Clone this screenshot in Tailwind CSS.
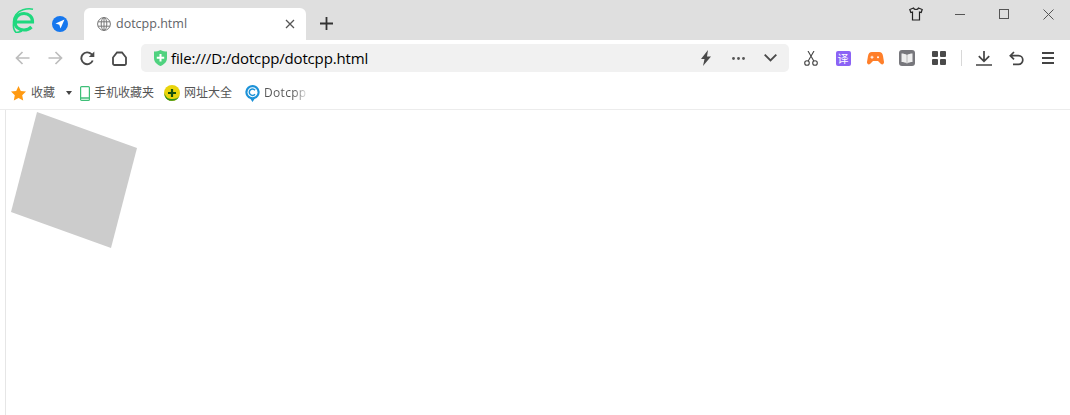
<!DOCTYPE html>
<html lang="en">
<head>
    <meta charset="UTF-8">
    <title>dotcpp.html</title>
    <script src="https://cdn.jsdelivr.net/npm/@tailwindcss/browser@4"></script>
</head>
<body class="bg-white w-[1070px] h-[415px] overflow-hidden flex flex-col font-['Inter','Noto_Sans_CJK_SC',sans-serif]">
    <!-- tab strip -->
    <div class="h-10 bg-[#dfdfdf] flex shrink-0">
        <div class="w-[84px] flex items-start shrink-0">
            <svg class="ml-[12px] mt-[8px] shrink-0" width="23" height="25" viewBox="0 0 23 25" fill="none">
                <path d="M3 14h17.500c.2-5-3.500-8.500-8.500-8.500-5.500 0-9 3.800-9 8.500 0 5 4 8 9 8 3 0 5.500-1 7.500-3" stroke="#1fd87e" stroke-width="3.200"/>
                <path d="M1.500 15C1 9 5 3.500 11 1.800c3.500-1 7-1.200 10-.5" stroke="#1fd87e" stroke-width="1.500"/>
                <path d="M1.500 15c-.5 4 .5 7.500 2.500 9.500 2 0 4-.5 6-1.500" stroke="#1fd87e" stroke-width="1.500"/>
            </svg>
            <svg class="ml-[17px] mt-[16px] shrink-0" width="16" height="16" viewBox="0 0 16 16">
                <circle cx="8" cy="8" r="8" fill="#1677ee"/>
                <path d="M12.500 3.500L3.500 7.500l3.800 1.200L8.500 12.500z" fill="#fff"/>
            </svg>
        </div>
        <div class="mt-2 w-[222px] h-8 bg-white rounded-t-[6px] flex items-center pl-[13px] pr-[11px] shrink-0">
            <svg class="shrink-0" width="14" height="14" viewBox="0 0 14 14" fill="none" stroke="#777" stroke-width="1">
                <circle cx="7" cy="7" r="6.400"/>
                <ellipse cx="7" cy="7" rx="2.800" ry="6.400"/>
                <path d="M1 4.800h12M1 9.200h12M7 .6v12.800"/>
            </svg>
            <span class="ml-[5px] text-[12.5px] text-[#5f6368] font-['Open_Sans',sans-serif]">dotcpp.html</span>
            <svg class="ml-auto shrink-0" width="10" height="10" viewBox="0 0 10 10" stroke="#555" stroke-width="1.300">
                <path d="M1 1l8 8M9 1L1 9"/>
            </svg>
        </div>
        <svg class="ml-[14px] mt-[17px] shrink-0" width="13" height="13" viewBox="0 0 13 13" stroke="#333" stroke-width="1.800">
            <path d="M6.500 0v13M0 6.500h13"/>
        </svg>
        <div class="ml-auto flex h-7 items-center">
            <div class="w-11 flex justify-center">
                <svg width="14" height="14" viewBox="0 0 14 14" fill="none" stroke="#222" stroke-width="1.200">
                    <path d="M4.500 1L.8 2.500l1 3 1.700-.5v8h7V5l1.700.5 1-3L9.500 1C9 3 5 3 4.500 1z"/>
                </svg>
            </div>
            <div class="w-11 flex justify-center"><div class="w-[10px] h-px bg-[#555]"></div></div>
            <div class="w-11 flex justify-center"><div class="w-[10px] h-[10px] border border-[#555]"></div></div>
            <div class="w-11 flex justify-center">
                <svg width="11" height="11" viewBox="0 0 11 11" stroke="#555" stroke-width="1"><path d="M.5.5l10 10M10.500.5l-10 10"/></svg>
            </div>
        </div>
    </div>

    <!-- address row -->
    <div class="h-[38px] flex items-center shrink-0 pb-[2px]">
        <div class="w-8 ml-[6px] flex justify-center">
            <svg width="15" height="14" viewBox="0 0 15 14" fill="none" stroke="#bdbdbd" stroke-width="1.700"><path d="M14.500 7H1.500M7.500 1l-6 6 6 6"/></svg>
        </div>
        <div class="w-8 ml-px flex justify-center">
            <svg width="15" height="14" viewBox="0 0 15 14" fill="none" stroke="#bdbdbd" stroke-width="1.700"><path d="M.5 7h13M7.500 1l6 6-6 6"/></svg>
        </div>
        <div class="w-8 flex justify-center">
            <svg width="15" height="15" viewBox="0 0 15 15" fill="none" stroke="#4a4a4a" stroke-width="1.900">
                <path d="M12.700 9.500A5.900 5.900 0 1 1 11.500 3.200L13 4.800"/>
                <path d="M14.300 .5v5.500H8.800" fill="#4a4a4a" stroke="none"/>
            </svg>
        </div>
        <div class="w-8 flex justify-center">
            <svg width="15" height="15" viewBox="0 0 15 15" fill="none" stroke="#4a4a4a" stroke-width="1.800">
                <path d="M1 6.500l4-5h5l4 5v6a1.500 1.500 0 0 1-1.500 1.500h-10A1.500 1.500 0 0 1 1 12.500z"/>
            </svg>
        </div>
        <div class="ml-[6px] w-[648px] h-7 bg-[#f1f1f1] rounded-[5px] flex items-center pl-3 shrink-0">
            <svg class="shrink-0" width="15" height="16" viewBox="0 0 15 16">
                <path d="M1 1.500C3 1.500 5.500 1 7.500 0c2 1 4.500 1.500 6.500 1.500V8c0 4-3 6.500-6.500 8C4 14.500 1 12 1 8z" fill="#4fd27f"/>
                <path d="M7.500 4v7.500M3.800 7.800h7.400" stroke="#fff" stroke-width="2"/>
            </svg>
            <span class="ml-[3px] text-[15px] text-black font-['Open_Sans',sans-serif] tracking-[-0.16px]">file:///D:/dotcpp/dotcpp.html</span>
            <div class="ml-auto flex items-center">
                <div class="w-8 flex justify-center">
                    <svg width="12" height="16" viewBox="0 0 12 16"><path d="M8 0L1 9h3.500L3 16l8-9.500H7z" fill="#4a4a4a"/></svg>
                </div>
                <div class="w-8 flex justify-center">
                    <svg width="13" height="3" viewBox="0 0 13 3" fill="#555"><circle cx="1.500" cy="1.500" r="1.400"/><circle cx="6.500" cy="1.500" r="1.400"/><circle cx="11.500" cy="1.500" r="1.400"/></svg>
                </div>
                <div class="w-8 flex justify-center mr-[3px]">
                    <svg width="13" height="8" viewBox="0 0 13 8" fill="none" stroke="#4a4a4a" stroke-width="1.900"><path d="M.7.7l5.800 5.800L12.300.7"/></svg>
                </div>
            </div>
        </div>
        <div class="ml-[6px] flex items-center">
            <div class="w-8 flex justify-center">
                <svg width="14" height="15" viewBox="0 0 14 15" fill="none" stroke="#444" stroke-width="1.100">
                    <circle cx="3" cy="12" r="2.300"/><circle cx="11" cy="12" r="2.300"/>
                    <path d="M4.200 10L10 0M9.800 10L4 0"/>
                </svg>
            </div>
            <div class="w-8 flex justify-center">
                <div class="w-[15px] h-[15px] rounded-[2px] bg-[#8b63f5] text-white text-[11px] leading-[15px] text-center font-['Noto_Sans_CJK_SC',sans-serif]">译</div>
            </div>
            <div class="w-8 flex justify-center">
                <svg width="17" height="13" viewBox="0 0 17 13">
                    <path d="M5 0h7c2.500 0 3.500 1.500 4 4l1 6c.2 2-1.500 3-3 2l-3-3H6l-3 3c-1.500 1-3.200 0-3-2l1-6C1.500 1.500 2.500 0 5 0z" fill="#ff7f2a"/>
                    <path d="M3.500 5.200h3M5 3.800v3" stroke="#fff" stroke-width="1"/>
                    <circle cx="11" cy="5.200" r="1" fill="#fff"/>
                </svg>
            </div>
            <div class="w-8 flex justify-center">
                <svg width="16" height="16" viewBox="0 0 16 16">
                    <rect width="16" height="16" rx="3" fill="#77777c"/>
                    <path d="M2.500 3.500c2 0 4 .5 5.500 1.500 1.500-1 3.500-1.500 5.500-1.500v8.500c-2 0-4 .5-5.500 1.500C6.500 12.500 4.500 12 2.500 12z" fill="#eee"/>
                    <path d="M8 5v8.500" stroke="#aaa" stroke-width=".8"/>
                </svg>
            </div>
            <div class="w-8 flex justify-center">
                <div class="grid grid-cols-2 gap-[2px]">
                    <div class="w-[6px] h-[6px] bg-[#4a4a4a] rounded-[1px]"></div>
                    <div class="w-[6px] h-[6px] bg-[#4a4a4a] rounded-[1px]"></div>
                    <div class="w-[6px] h-[6px] bg-[#4a4a4a] rounded-[1px]"></div>
                    <div class="w-[6px] h-[6px] bg-[#4a4a4a] rounded-[1px]"></div>
                </div>
            </div>
            <div class="ml-[6px] w-px h-4 bg-[#d8d8d8]"></div>
            <div class="w-8 ml-[6px] flex justify-center">
                <svg width="16" height="15" viewBox="0 0 16 15" fill="none" stroke="#444" stroke-width="1.700">
                    <path d="M8 0v10M2.800 5.200L8 10.400l5.200-5.200M0 14h16"/>
                </svg>
            </div>
            <div class="w-8 flex justify-center">
                <svg width="15" height="15" viewBox="0 0 15 15" fill="none" stroke="#444" stroke-width="1.700">
                    <path d="M5 1L1.300 4.700 5 8.400M1.300 4.700h8.200a4.300 4.300 0 0 1 0 8.600H4"/>
                </svg>
            </div>
            <div class="w-8 flex flex-col items-center gap-[3px]">
                <div class="w-3 h-[2px] bg-[#444]"></div>
                <div class="w-3 h-[2px] bg-[#444]"></div>
                <div class="w-3 h-[2px] bg-[#444]"></div>
            </div>
        </div>
    </div>

    <!-- bookmarks -->
    <div class="h-8 flex items-center pb-px border-b border-[#ececec] text-[12px] text-[#555] shrink-0">
        <svg class="ml-[11px] shrink-0" width="15" height="15" viewBox="0 0 15 15">
            <path d="M7.500 0l2.300 4.900 5.200.7-3.800 3.600 1 5.300-4.700-2.600-4.700 2.600 1-5.300L0 5.600l5.200-.7z" fill="#ff9a12"/>
        </svg>
        <span class="ml-[5px]">收藏</span>
        <svg class="ml-[11px] shrink-0" width="6" height="4" viewBox="0 0 6 4"><path d="M0 0h6L3 4z" fill="#444"/></svg>
        <svg class="ml-2 shrink-0" width="10" height="15" viewBox="0 0 10 15" fill="none">
            <rect x=".6" y=".6" width="8.800" height="13.800" rx="1" stroke="#3fbf78" stroke-width="1.200"/>
            <path d="M1 12h8" stroke="#3fbf78" stroke-width="1.500"/>
        </svg>
        <span class="ml-1">手机收藏夹</span>
        <svg class="ml-[10px] shrink-0" width="16" height="16" viewBox="0 0 16 16">
            <circle cx="8" cy="8" r="8" fill="#e9d40c"/>
            <path d="M.5 10.500a8 8 0 0 0 15 0c-1 2.500-3.500 3.500-7 3.500S1.500 13 .5 10.500z" fill="#2f8f1c"/>
            <path d="M.2 8a8 8 0 0 0 7.800 8c-3-1-6-3.500-7.800-8z" fill="#2f8f1c"/>
            <path d="M8 4v8M4 8h8" stroke="#17500e" stroke-width="2.200"/>
        </svg>
        <span class="ml-1">网址大全</span>
        <svg class="ml-[13px] shrink-0" width="15" height="17" viewBox="0 0 15 17">
            <path d="M7.500 0a7.200 7.200 0 0 1 2 14.100L7.500 17l-2-2.900A7.200 7.200 0 0 1 7.500 0z" fill="#1c92d8"/>
            <circle cx="7.500" cy="7.200" r="5" fill="#fff"/>
            <path d="M10 5.200a3.200 3.200 0 1 0 0 4" fill="none" stroke="#1c92d8" stroke-width="1.500"/>
        </svg>
        <span class="ml-1 w-[42px] overflow-hidden whitespace-nowrap bg-gradient-to-r from-[#555] from-70% to-[#ddd] bg-clip-text text-transparent font-['Open_Sans',sans-serif] text-[12px] tracking-[0.3px]">Dotcpp</span>
    </div>

    <!-- page -->
    <div class="grow flex">
        <div class="ml-[5px] w-px bg-[#e6e6e6]"></div>
        <svg class="ml-[4px] mt-[2px] shrink-0" width="127" height="137" viewBox="0 0 127 137">
            <polygon points="27,0 127,36 101,136 1,100" fill="#cccccc"/>
        </svg>
    </div>
</body>
</html>
